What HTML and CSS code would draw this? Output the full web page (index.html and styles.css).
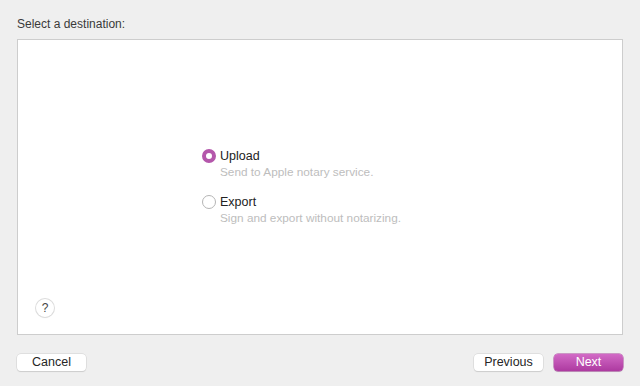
FILE: index.html
```html
<!DOCTYPE html>
<html lang="en">
<head>
    <meta charset="UTF-8">
    <meta name="viewport" content="width=device-width, initial-scale=1.0">
    <title>Notarize</title>
    <link rel="stylesheet" href="styles.css">
</head>
<body>
    <div class="sheet">
        <p class="title">Select a destination:</p>
        <div class="panel">
            <ul class="options">
                <li class="option on">
                    <span class="radio"></span>
                    <div class="text">
                        <p class="name">Upload</p>
                        <p class="desc">Send to Apple notary service.</p>
                    </div>
                </li>
                <li class="option">
                    <span class="radio"></span>
                    <div class="text">
                        <p class="name">Export</p>
                        <p class="desc">Sign and export without notarizing.</p>
                    </div>
                </li>
            </ul>
            <span class="help">?</span>
        </div>
        <div class="footer">
            <button class="btn">Cancel</button>
            <div class="right">
                <button class="btn">Previous</button>
                <button class="btn primary">Next</button>
            </div>
        </div>
    </div>
</body>
</html>
```

FILE: styles.css
```css
*{
    margin: 0;
    padding: 0;
    list-style: none;
    box-sizing: border-box;
}
html,body{
    height: 100%;
}
body{
    background: #efefef;
    font-family: "Liberation Sans", Arial, sans-serif;
    color: #262626;
}
.sheet{
    display: flex;
    flex-direction: column;
    height: 100%;
    padding: 17px 17px 0;
}
.title{
    font-size: 12px;
    line-height: 14px;
    color: #3a3a3a;
    margin-bottom: 8px;
}
.panel{
    display: grid;
    grid-template-areas: "a";
    height: 296px;
    background: #fff;
    border: 1px solid #cdcdcd;
}
.options{
    grid-area: a;
    align-self: center;
    padding-left: 184px;
    display: flex;
    flex-direction: column;
    gap: 15px;
}
.option{
    display: flex;
    gap: 4px;
}
.radio{
    width: 14px;
    height: 14px;
    border-radius: 50%;
    border: 1px solid #b5b5b5;
    background: #fff;
    flex-shrink: 0;
}
.option.on .radio{
    border: 4px solid #b457ab;
    background: #fff;
}
.name{
    font-size: 12.5px;
    line-height: 15px;
    color: #222;
}
.desc{
    font-size: 11.8px;
    line-height: 16px;
    color: #bdbdbd;
}
.help{
    grid-area: a;
    align-self: end;
    justify-self: start;
    margin: 0 0 17px 18px;
    width: 18px;
    height: 18px;
    border-radius: 50%;
    background: #fff;
    box-shadow: 0 0 0 1px #dcdcdc, 0 1px 1px rgba(0,0,0,.12);
    font-size: 12px;
    line-height: 18px;
    text-align: center;
    color: #444;
}
.footer{
    display: flex;
    justify-content: space-between;
    margin-top: 19px;
}
.right{
    display: flex;
    gap: 11px;
}
.btn{
    width: 69px;
    height: 17px;
    border: none;
    border-radius: 4px;
    background: #fff;
    box-shadow: 0 0 0 .5px #cfcfcf, 0 1px 1px rgba(0,0,0,.15);
    font-family: inherit;
    font-size: 12.5px;
    line-height: 17px;
    color: #262626;
}
.btn.primary{
    background: linear-gradient(#d26ac6, #ad3aa0);
    color: #fff;
    box-shadow: 0 0 0 .5px #a8409c, 0 1px 1px rgba(0,0,0,.15);
}
```
